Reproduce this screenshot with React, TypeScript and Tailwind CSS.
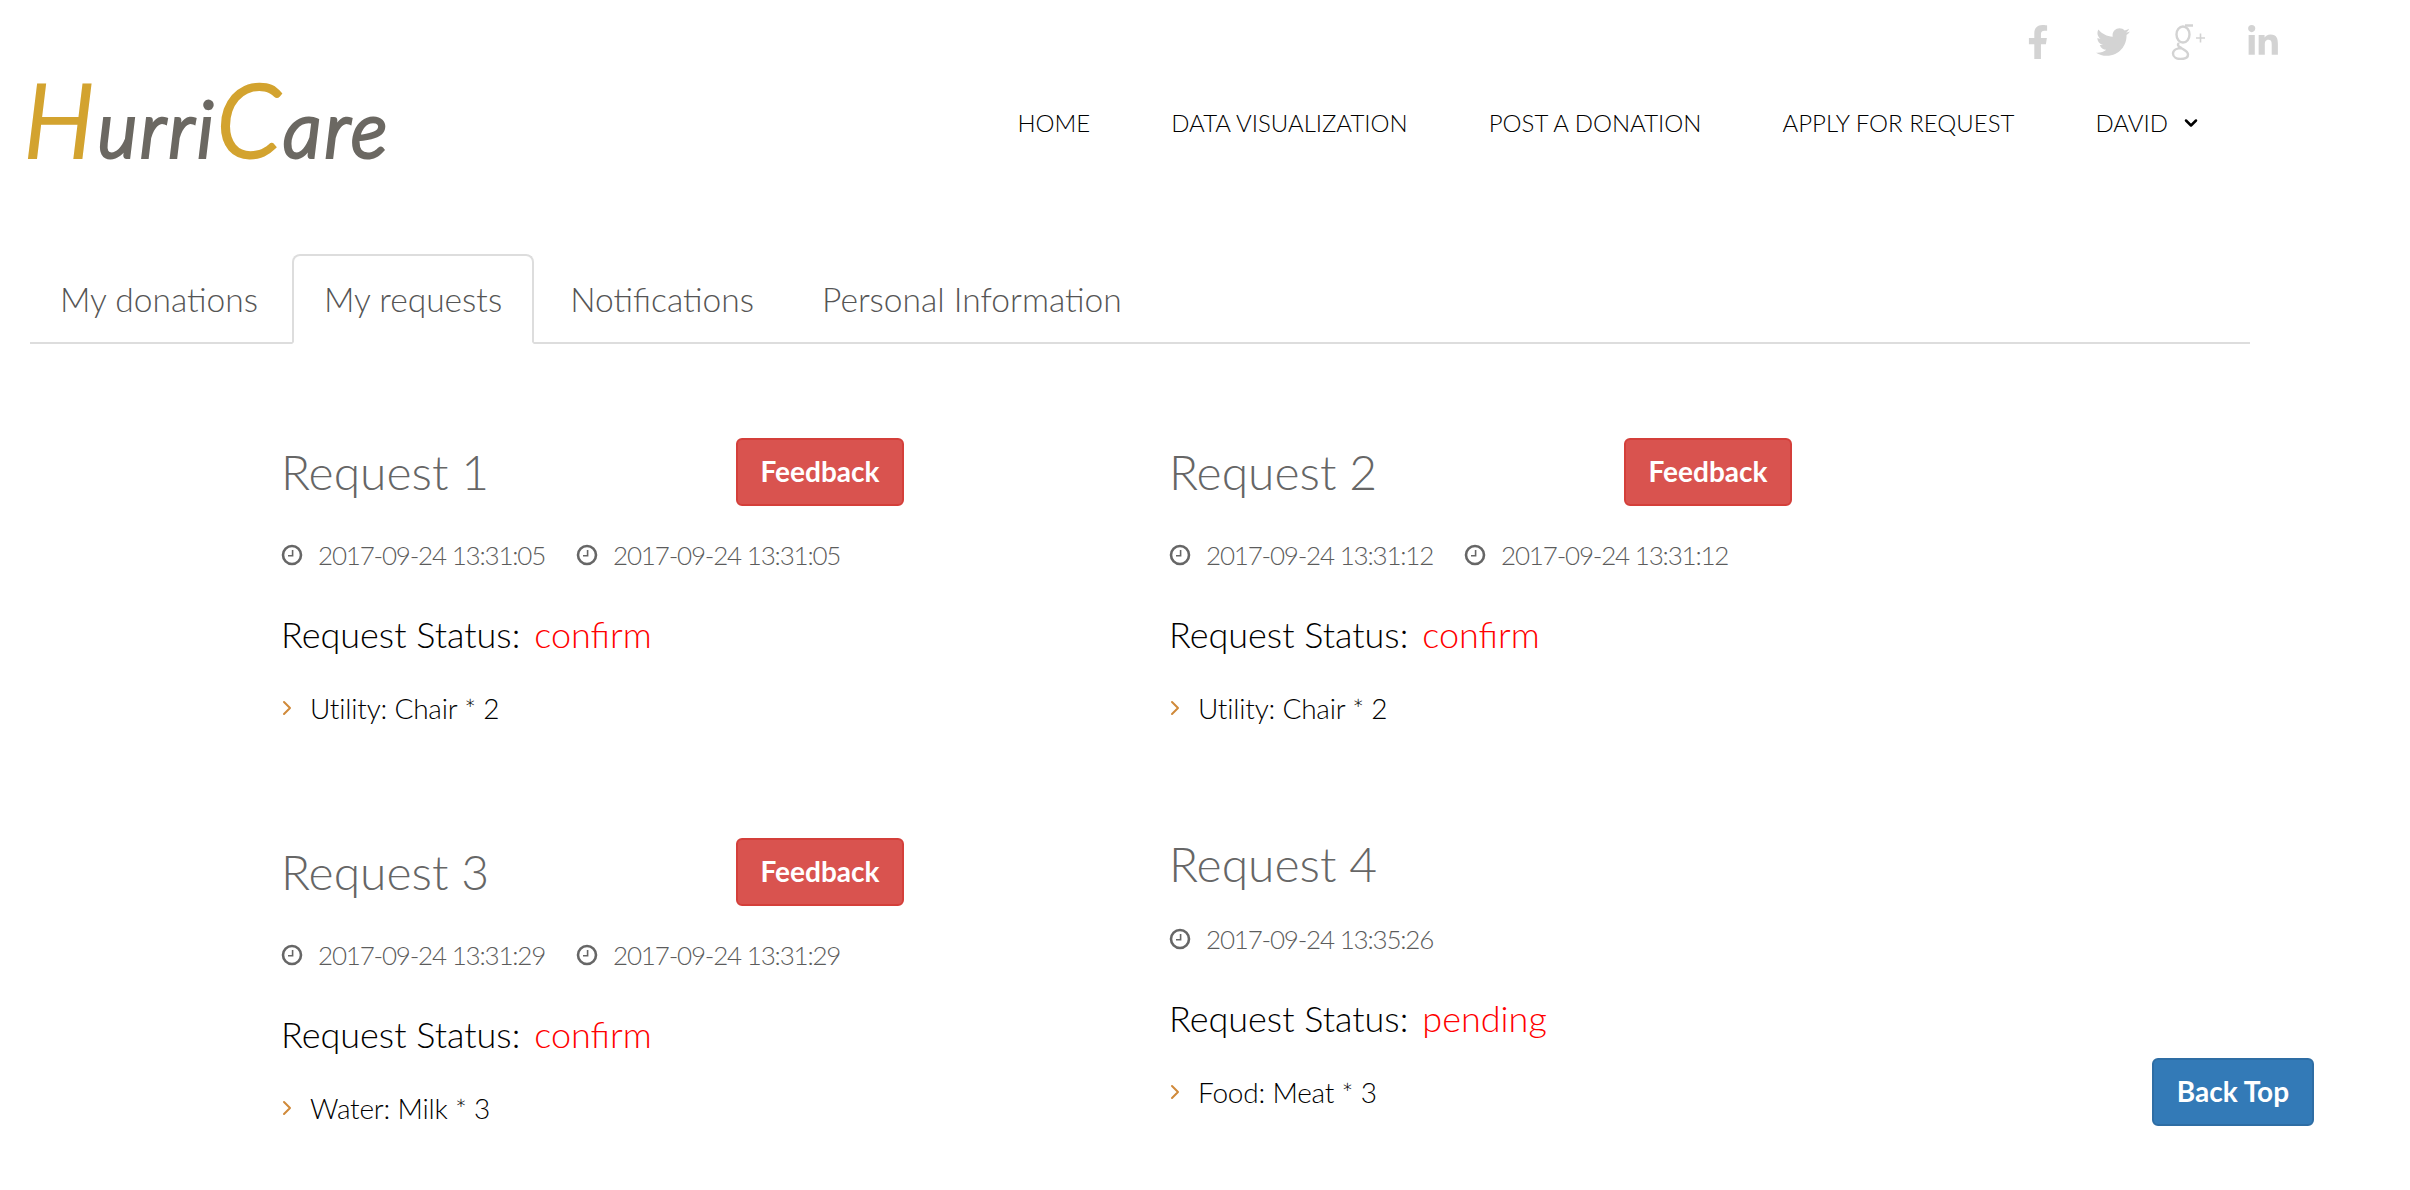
import { FaFacebookF, FaTwitter, FaLinkedinIn } from 'react-icons/fa';
import { FiChevronDown, FiChevronRight } from 'react-icons/fi';

const navItems = ['HOME', 'DATA VISUALIZATION', 'POST A DONATION', 'APPLY FOR REQUEST'];
const tabs = ['My donations', 'My requests', 'Notifications', 'Personal Information'];

interface RequestInfo {
  title: string;
  dates: string[];
  status: string;
  item: string;
  feedback: boolean;
}

const requests: RequestInfo[] = [
  { title: 'Request 1', dates: ['2017-09-24 13:31:05', '2017-09-24 13:31:05'], status: 'confirm', item: 'Utility: Chair * 2', feedback: true },
  { title: 'Request 2', dates: ['2017-09-24 13:31:12', '2017-09-24 13:31:12'], status: 'confirm', item: 'Utility: Chair * 2', feedback: true },
  { title: 'Request 3', dates: ['2017-09-24 13:31:29', '2017-09-24 13:31:29'], status: 'confirm', item: 'Water: Milk * 3', feedback: true },
  { title: 'Request 4', dates: ['2017-09-24 13:35:26'], status: 'pending', item: 'Food: Meat * 3', feedback: false },
];

// old style serif g+ mark
function GooglePlusIcon() {
  return (
    <svg viewBox="0 0 36 36" className="w-[36px] h-[36px]" fill="none" stroke="currentColor" strokeWidth="2.4">
      <ellipse cx="13" cy="10.5" rx="6.5" ry="8" />
      <path d="M15 1.5h8M9 19c-2 2-1 3 2 5 4 2.5 7 3.5 7 6.5 0 3-3.5 4.5-7.5 4.5S3 33 3 29.5c0-3.5 4-5.5 9-5.5" />
      <path d="M26 14h9M30.5 9.5v9" strokeWidth="1.6" />
    </svg>
  );
}

function ClockIcon() {
  return (
    <svg viewBox="0 0 22 22" className="w-[22px] h-[22px] text-[#666]" fill="none" stroke="currentColor">
      <circle cx="11" cy="11" r="9" strokeWidth="2.6" />
      <path d="M11.6 6v5.8H7" strokeWidth="1.6" />
    </svg>
  );
}

function Logo() {
  return (
    <div className="-mt-[16px] text-[76px] leading-[100px] italic font-light tracking-[3.5px] text-[#6b6862] font-['Lato',sans-serif] [-webkit-text-stroke:4px_currentColor]">
      <span className="text-[100px] text-[#d3a32f]">H</span>urri<span className="text-[100px] text-[#d3a32f]">C</span>are
    </div>
  );
}

function RequestCard({ request }: { request: RequestInfo }) {
  return (
    <div className="w-[622px]">
      <div className={`flex items-center justify-between ${request.feedback ? 'h-[68px]' : 'h-[52px]'}`}>
        <h2 className="-ml-[1px] text-[48px] leading-[52px] font-light text-[#666]">{request.title}</h2>
        {request.feedback && (
          <button className="w-[168px] h-[68px] pb-[2px] rounded-[6px] border-2 border-[#d43f3a] bg-[#d9534f] text-white text-[28px] font-bold">
            Feedback
          </button>
        )}
      </div>
      <div className="mt-[33px] -ml-[1px] flex items-center gap-[31px] text-[26px] leading-[32px] font-light tracking-[-1.2px] text-[#5c5c5c]">
        {request.dates.map((date, i) => (
          <span key={i} className="flex items-center gap-[15px]">
            <ClockIcon />
            {date}
          </span>
        ))}
      </div>
      <p className="mt-[43px] -ml-[1px] text-[36px] leading-[40px] font-light text-black">
        Request Status:<span className="ml-[14px] text-[#ff0000]">{request.status}</span>
      </p>
      <div className="mt-[38px] flex items-center text-[28px] leading-[32px] font-light text-black tracking-[-0.2px]">
        <FiChevronRight className="w-[24px] h-[28px] mr-[11px] -ml-[7px] text-[#d08a3a]" />
        {request.item}
      </div>
    </div>
  );
}

export default function App() {
  return (
    <div className="relative h-[1190px] overflow-hidden bg-white font-['Lato',sans-serif]">
      <header className="h-[223px]">
        <div className="flex h-[84px] items-center justify-end gap-[39px] pr-[129px] text-[#d3d3d3]">
          <FaFacebookF className="w-[36px] h-[34px]" />
          <FaTwitter className="w-[36px] h-[34px]" />
          <GooglePlusIcon />
          <FaLinkedinIn className="w-[36px] h-[34px]" />
        </div>
        <div className="flex items-start justify-between pl-[24px] pr-[209px]">
          <Logo />
          <nav className="flex items-center gap-[81px] text-[24px] leading-[78px] font-light text-black">
            {navItems.map((item) => (
              <a key={item}>{item}</a>
            ))}
            <a className="flex items-center gap-[13px]">
              DAVID
              <FiChevronDown className="w-[20px] h-[20px] stroke-[3]" />
            </a>
          </nav>
        </div>
      </header>

      <div className="mx-[30px] w-[2220px] flex items-end border-b-2 border-[#ddd] h-[122px] -mt-[1px]">
        {tabs.map((tab, i) => (
          <a
            key={tab}
            className={`mr-[4px] -mb-[2px] h-[90px] rounded-t-[8px] border-2 text-[33.6px] font-light leading-[86px] text-[#555] ${
              i === 0 ? 'px-[28px]' : 'px-[30px]'
            } ${i === 1 ? 'border-[#ddd] border-b-white bg-white' : 'border-transparent'}`}
          >
            {tab}
          </a>
        ))}
      </div>

      <main className="pl-[282px] pt-[94px] grid grid-cols-[888px_622px] gap-y-[114px]">
        {requests.map((request) => (
          <RequestCard key={request.title} request={request} />
        ))}
      </main>

      <button className="absolute left-[2152px] top-[1058px] w-[162px] h-[68px] pb-[2px] rounded-[6px] border-2 border-[#2e6da4] bg-[#337ab7] text-white text-[28px] font-bold">
        Back Top
      </button>
    </div>
  );
}
